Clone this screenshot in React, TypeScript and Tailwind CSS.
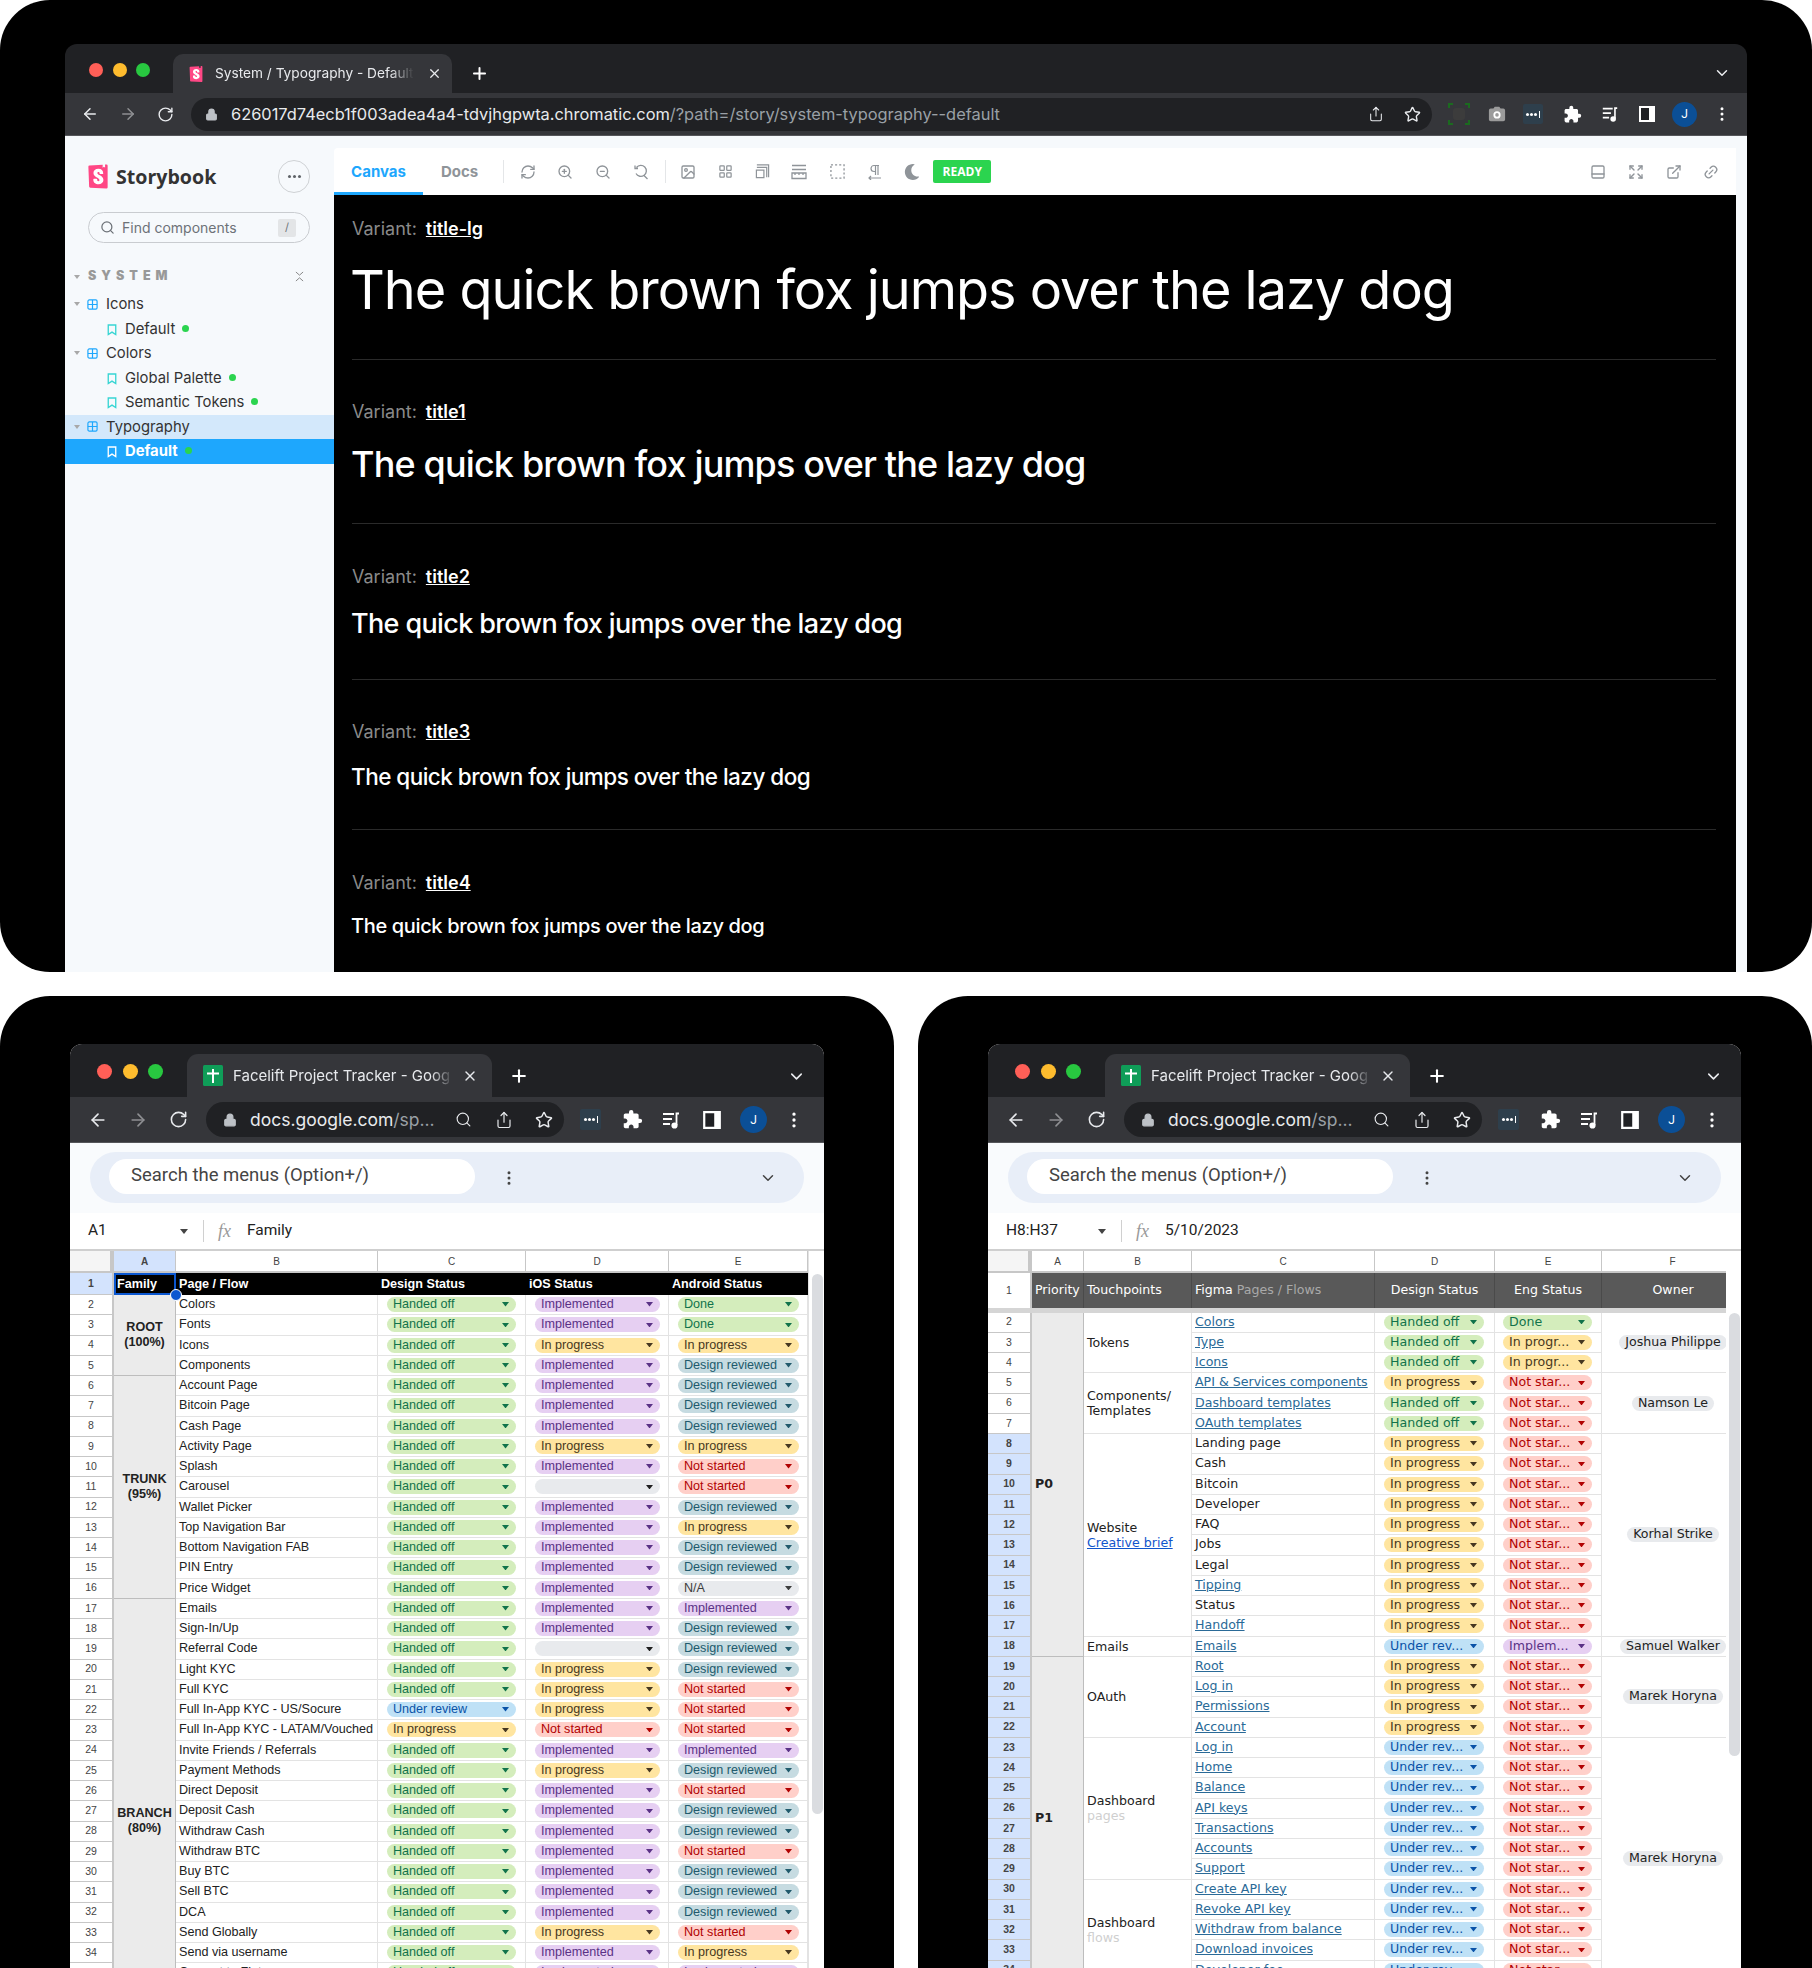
import type { ReactNode } from "react";
import {
  ArrowLeft,
  ArrowRight,
  ChevronDown,
  Expand,
  ExternalLink,
  Image as ImageIcon,
  LayoutGrid,
  Link2,
  Lock,
  MoreVertical,
  PanelBottom,
  Plus,
  RefreshCw,
  RotateCw,
  Search,
  Share,
  Star,
  X,
  ZoomIn,
  ZoomOut,
} from "lucide-react";
import { FaMoon } from "react-icons/fa";
import { MdExtension } from "react-icons/md";

const statuses: Record<string, { label: string; style: string }> = {
  H: { label: "Handed off", style: "bg-[#d4edbc] text-[#11734b]" },
  D: { label: "Done", style: "bg-[#d4edbc] text-[#11734b]" },
  M: { label: "Implemented", style: "bg-[#e6cff2] text-[#5a3286]" },
  P: { label: "In progress", style: "bg-[#ffe5a0] text-[#473821]" },
  R: { label: "Design reviewed", style: "bg-[#c6dbe1] text-[#215a6c]" },
  N: { label: "Not started", style: "bg-[#ffcfc9] text-[#b10202]" },
  U: { label: "Under review", style: "bg-[#bfe1f6] text-[#0a53a8]" },
  A: { label: "N/A", style: "bg-[#e8eaed] text-[#3d3d3d]" },
  B: { label: "", style: "bg-[#e8eaed] text-[#1f1f1f]" },
  u: { label: "Under rev...", style: "bg-[#bfe1f6] text-[#0a53a8]" },
  p: { label: "In progr...", style: "bg-[#ffe5a0] text-[#473821]" },
  n: { label: "Not star...", style: "bg-[#ffcfc9] text-[#b10202]" },
  m: { label: "Implem...", style: "bg-[#e6cff2] text-[#5a3286]" },
};

const trackerRows: [string, string, string, string][] = [
  ["Colors", "H", "M", "D"],
  ["Fonts", "H", "M", "D"],
  ["Icons", "H", "P", "P"],
  ["Components", "H", "M", "R"],
  ["Account Page", "H", "M", "R"],
  ["Bitcoin Page", "H", "M", "R"],
  ["Cash Page", "H", "M", "R"],
  ["Activity Page", "H", "P", "P"],
  ["Splash", "H", "M", "N"],
  ["Carousel", "H", "B", "N"],
  ["Wallet Picker", "H", "M", "R"],
  ["Top Navigation Bar", "H", "M", "P"],
  ["Bottom Navigation FAB", "H", "M", "R"],
  ["PIN Entry", "H", "M", "R"],
  ["Price Widget", "H", "M", "A"],
  ["Emails", "H", "M", "M"],
  ["Sign-In/Up", "H", "M", "R"],
  ["Referral Code", "H", "B", "R"],
  ["Light KYC", "H", "P", "R"],
  ["Full KYC", "H", "P", "N"],
  ["Full In-App KYC - US/Socure", "U", "P", "N"],
  ["Full In-App KYC - LATAM/Vouched", "P", "N", "N"],
  ["Invite Friends / Referrals", "H", "M", "M"],
  ["Payment Methods", "H", "P", "R"],
  ["Direct Deposit", "H", "M", "N"],
  ["Deposit Cash", "H", "M", "R"],
  ["Withdraw Cash", "H", "M", "R"],
  ["Withdraw BTC", "H", "M", "N"],
  ["Buy BTC", "H", "M", "R"],
  ["Sell BTC", "H", "M", "R"],
  ["DCA", "H", "M", "R"],
  ["Send Globally", "H", "P", "N"],
  ["Send via username", "H", "M", "P"],
  ["Convert to Fiat", "H", "M", "M"],
];

const familyGroups: Record<number, { top: string; bottom: string; span: string }> = {
  2: { top: "ROOT", bottom: "(100%)", span: "row-span-4" },
  6: { top: "TRUNK", bottom: "(95%)", span: "row-span-11" },
  17: { top: "BRANCH", bottom: "(80%)", span: "row-span-22" },
};

// second sheet: page, is it a link, design status, eng status
const touchRows: [string, boolean, string, string][] = [
  ["Colors", true, "H", "D"],
  ["Type", true, "H", "p"],
  ["Icons", true, "H", "p"],
  ["API & Services components", true, "P", "n"],
  ["Dashboard templates", true, "H", "n"],
  ["OAuth templates", true, "H", "n"],
  ["Landing page", false, "P", "n"],
  ["Cash", false, "P", "n"],
  ["Bitcoin", false, "P", "n"],
  ["Developer", false, "P", "n"],
  ["FAQ", false, "P", "n"],
  ["Jobs", false, "P", "n"],
  ["Legal", false, "P", "n"],
  ["Tipping", true, "P", "n"],
  ["Status", false, "P", "n"],
  ["Handoff", true, "P", "n"],
  ["Emails", true, "u", "m"],
  ["Root", true, "P", "n"],
  ["Log in", true, "P", "n"],
  ["Permissions", true, "P", "n"],
  ["Account", true, "P", "n"],
  ["Log in", true, "u", "n"],
  ["Home", true, "u", "n"],
  ["Balance", true, "u", "n"],
  ["API keys", true, "u", "n"],
  ["Transactions", true, "u", "n"],
  ["Accounts", true, "u", "n"],
  ["Support", true, "u", "n"],
  ["Create API key", true, "u", "n"],
  ["Revoke API key", true, "u", "n"],
  ["Withdraw from balance", true, "u", "n"],
  ["Download invoices", true, "u", "n"],
  ["Developer fee", true, "u", "n"],
];

const priorityGroups: Record<number, { label: string; span: string }> = {
  2: { label: "P0", span: "row-span-17" },
  19: { label: "P1", span: "row-span-16" },
};

const touchGroups: Record<number, { span: string; content: ReactNode }> = {
  2: { span: "row-span-3", content: "Tokens" },
  5: { span: "row-span-3", content: <>Components/<br />Templates</> },
  8: {
    span: "row-span-10",
    content: <>Website<br /><span className="text-[#1155cc] underline">Creative brief</span></>,
  },
  18: { span: "row-span-1", content: "Emails" },
  19: { span: "row-span-4", content: "OAuth" },
  23: { span: "row-span-7", content: <>Dashboard<br /><span className="text-[#cfcfcf]">pages</span></> },
  30: { span: "row-span-5", content: <>Dashboard<br /><span className="text-[#cfcfcf]">flows</span></> },
};

const ownerGroups: Record<number, { name: string; span: string }> = {
  2: { name: "Joshua Philippe", span: "row-span-3" },
  5: { name: "Namson Le", span: "row-span-3" },
  8: { name: "Korhal Strike", span: "row-span-10" },
  18: { name: "Samuel Walker", span: "row-span-1" },
  19: { name: "Marek Horyna", span: "row-span-4" },
  23: { name: "Marek Horyna", span: "row-span-12" },
};

const variants = [
  { name: "title-lg", box: "pt-[21px] pb-[37px]", gap: "mt-[18px] -ml-[2px]", text: "text-[54px] leading-[64px] tracking-[-1px]" },
  { name: "title1", box: "pt-[39px] pb-[35px]", gap: "mt-[17px] -ml-[1px]", text: "text-[36px] leading-[48px] tracking-[-0.85px] font-medium" },
  { name: "title2", box: "pt-[40px] pb-[37px]", gap: "mt-[18px] -ml-[1px]", text: "text-[27px] leading-[36px] tracking-[-0.63px] font-medium" },
  { name: "title3", box: "pt-[39px] pb-[36px]", gap: "mt-[18px] -ml-[1px]", text: "text-[22.5px] leading-[32px] tracking-[-0.53px] font-medium" },
  { name: "title4", box: "pt-[40px] pb-[30px]", gap: "mt-[17px] -ml-[1px]", text: "text-[20px] leading-[30px] tracking-[-0.35px] font-medium" },
];

function StorybookMark({ className }: { className: string }) {
  return (
    <svg viewBox="0 0 24 24" className={className}>
      <rect x="6" y="3" width="12" height="18" fill="#fff" />
      <path
        fill="#ff4785"
        d="M16.71.243l-.12 2.71a.18.18 0 00.29.15l1.06-.8.9.7a.18.18 0 00.28-.14l-.1-2.76 1.33-.1a1.2 1.2 0 011.279 1.2v21.596a1.2 1.2 0 01-1.26 1.2l-16.096-.72a1.2 1.2 0 01-1.15-1.16l-.75-19.797a1.2 1.2 0 011.13-1.27L16.7.222zM13.64 9.3c0 .47 3.16.24 3.59-.08 0-3.2-1.72-4.89-4.859-4.89-3.15 0-4.899 1.72-4.899 4.29 0 4.45 5.999 4.53 5.999 6.959 0 .7-.32 1.1-1.05 1.1-.96 0-1.35-.49-1.3-2.16 0-.36-3.649-.48-3.769 0-.27 4.03 2.23 5.2 5.099 5.2 2.79 0 4.969-1.49 4.969-4.18 0-4.77-6.099-4.64-6.099-6.999 0-.97.72-1.1 1.13-1.1.45 0 1.25.07 1.19 1.87z"
      />
    </svg>
  );
}

function SheetsMark() {
  return (
    <svg viewBox="0 0 20 21" className="w-[20px] h-[21px] shrink-0">
      <rect width="20" height="21" rx="1.5" fill="#0f9d58" />
      <path d="M10 4v14M4 8.5h12" stroke="#fff" strokeWidth="2" />
    </svg>
  );
}

function TrafficLights({ className, dot }: { className: string; dot: string }) {
  return (
    <div className={`flex ${className}`}>
      <span className={`${dot} rounded-full bg-[#ff5f57]`} />
      <span className={`${dot} rounded-full bg-[#febc2e]`} />
      <span className={`${dot} rounded-full bg-[#28c840]`} />
    </div>
  );
}

function Avatar({ className }: { className: string }) {
  return (
    <span className={`${className} rounded-full bg-[#0b4f96] text-white flex items-center justify-center text-[12px] [font-family:Roboto,sans-serif]`}>
      J
    </span>
  );
}

function DotsExtension({ className }: { className: string }) {
  return (
    <span className={`${className} rounded-[2px] bg-[#2e3f4c] flex items-center justify-center gap-[1px]`}>
      <span className="w-[3px] h-[3px] rounded-full bg-white" />
      <span className="w-[3px] h-[3px] rounded-full bg-white" />
      <span className="w-[3px] h-[3px] rounded-full bg-white" />
      <span className="w-[1px] h-[7px] ml-[1px] bg-white" />
    </span>
  );
}

function MediaQueue({ size }: { size: number }) {
  return (
    <svg viewBox="0 0 20 20" width={size} height={size} fill="none" stroke="#fff" strokeWidth="1.8">
      <path d="M2 4h11M2 9h9M2 14h7" />
      <path d="M15.5 15V3.5h2.5" />
      <circle cx="13.5" cy="15.5" r="2.2" fill="#fff" />
    </svg>
  );
}

function SidePanel({ size }: { size: number }) {
  return (
    <svg viewBox="0 0 18 18" width={size} height={size}>
      <path d="M1 1h16v16H1z" fill="#fff" />
      <path d="M3 3h8v12H3z" fill="#202124" />
    </svg>
  );
}

function BrowserChrome() {
  return (
    <>
      <div className="h-[49px] shrink-0 bg-[#202124] flex items-end">
        <TrafficLights className="ml-[24px] mb-[16px] gap-[9.5px]" dot="w-[14px] h-[14px]" />
        <div className="ml-[23px] w-[279px] h-[39px] bg-[#35363a] rounded-t-[10px] flex items-center pl-[15px] text-[#e8eaed]">
          <StorybookMark className="w-[16px] h-[20px] shrink-0" />
          <span className="ml-[11px] w-[199px] overflow-hidden whitespace-nowrap text-[13.7px] [font-family:Inter,sans-serif] [mask-image:linear-gradient(to_right,black_88%,transparent)]">
            System / Typography - Default
          </span>
          <X size={15} className="ml-[13px] shrink-0" />
        </div>
        <Plus size={19} className="ml-[18px] mb-[10px] text-white" strokeWidth={2.5} />
        <ChevronDown size={18} className="ml-auto mr-[16px] mb-[11px] text-[#e8eaed]" />
      </div>
      <div className="h-[43px] shrink-0 bg-[#35363a] border-b border-[#55565a] flex items-center text-[#e8eaed]">
        <ArrowLeft size={18} className="ml-[16px]" />
        <ArrowRight size={18} className="ml-[20px] text-[#8e8f92]" />
        <RotateCw size={17} className="ml-[20px]" />
        <div className="ml-[17px] w-[1241px] h-[33px] rounded-full bg-[#202124] flex items-center pl-[14px] pr-[11px]">
          <Lock size={13} fill="#bdc1c6" className="text-[#bdc1c6]" />
          <span className="ml-[13px] text-[16.4px] [font-family:Inter,sans-serif] whitespace-nowrap">
            626017d74ecb1f003adea4a4-tdvjhgpwta.chromatic.com
            <span className="text-[#9aa0a6]">/?path=/story/system-typography--default</span>
          </span>
          <Share size={16} strokeWidth={1.6} className="ml-auto" />
          <Star size={17} className="ml-[20px]" />
        </div>
        <svg viewBox="0 0 24 24" className="ml-[15px] w-[24px] h-[24px]" fill="none" stroke="#1b6a1f" strokeWidth="2">
          <path d="M2 6V2h4M18 2h4v4M22 18v4h-4M6 22H2v-4" />
          <rect x="6" y="6" width="12" height="12" rx="3" stroke="none" fill="#3c3c3c" />
        </svg>
        <svg viewBox="0 0 20 20" className="ml-[17px] w-[18px] h-[18px]">
          <path d="M1 6a2 2 0 012-2h3l1.5-2h5L14 4h3a2 2 0 012 2v10a2 2 0 01-2 2H3a2 2 0 01-2-2z" fill="#9b9b9b" />
          <circle cx="10" cy="11" r="4" fill="#fff" />
          <circle cx="10" cy="11" r="2" fill="#9b9b9b" />
        </svg>
        <DotsExtension className="ml-[17px] w-[20px] h-[20px]" />
        <MdExtension size={19} className="ml-[20px] text-white" />
        <span className="ml-[19px] flex"><MediaQueue size={18} /></span>
        <span className="ml-[19px] flex"><SidePanel size={18} /></span>
        <Avatar className="ml-[16px] w-[25px] h-[25px]" />
        <MoreVertical size={18} className="ml-[16px] text-white" />
      </div>
    </>
  );
}

function SidebarRow({ label, story, depth, active, open, dot }: { label: string; story?: boolean; depth?: boolean; active?: boolean; open?: boolean; dot?: boolean }) {
  const rowTone = active ? "bg-[#1ea7fd] text-white font-bold" : open ? "bg-[#d3e8fb] text-[#333]" : "text-[#333]";
  return (
    <div className={`h-[24.5px] flex items-center ${rowTone}`}>
      {depth ? (
        <span className="ml-[9px] w-0 h-0 border-x-[3.5px] border-x-transparent border-t-[4px] border-t-[#a8a8a8]" />
      ) : (
        <span className="ml-[9px] w-[7px]" />
      )}
      {story ? (
        <svg viewBox="0 0 12 14" className={`ml-[26px] w-[10px] h-[12px] mt-[2px] ${active ? "text-white" : "text-[#37d5d3]"}`} fill="none" stroke="currentColor" strokeWidth="1.6">
          <path d="M1.5 1h9v11.5L6 9.5l-4.5 3z" />
        </svg>
      ) : (
        <svg viewBox="0 0 12 12" className="ml-[7px] w-[11px] h-[11px] text-[#1ea7fd]" fill="none" stroke="currentColor" strokeWidth="1.3">
          <rect x="1" y="1" width="10" height="10" rx="1.5" />
          <path d="M6 1v10M1 6h10" />
        </svg>
      )}
      <span className="text-[14.8px] ml-[8px]">{label}</span>
      {dot && <span className="ml-[7px] -mt-[1px] w-[7px] h-[7px] rounded-full bg-[#2bd44f]" />}
    </div>
  );
}

function Sidebar() {
  return (
    <aside className="w-[269px] shrink-0 pt-[24px] [font-family:Inter,sans-serif]">
      <div className="flex items-center pl-[22px] pr-[24px]">
        <StorybookMark className="w-[24px] h-[27px] -ml-[1px]" />
        <span className="ml-[6px] text-[19.6px] font-bold text-[#333] [font-family:'Open_Sans',sans-serif]">Storybook</span>
        <span className="ml-auto w-[32px] h-[33px] rounded-full border border-[#cfd2d5] flex items-center justify-center gap-[2px]">
          <span className="w-[3px] h-[3px] rounded-full bg-[#5f6368]" />
          <span className="w-[3px] h-[3px] rounded-full bg-[#5f6368]" />
          <span className="w-[3px] h-[3px] rounded-full bg-[#5f6368]" />
        </span>
      </div>
      <div className="mt-[19px] ml-[23px] w-[222px] h-[31px] rounded-full border border-[#c9ccd0] flex items-center pl-[11px] pr-[13px] text-[#6d7278]">
        <Search size={15} />
        <span className="ml-[7px] text-[14px]">Find components</span>
        <span className="ml-auto w-[18px] h-[18px] rounded-[2px] bg-[#e3e5e7] flex items-center justify-center text-[11px]">/</span>
      </div>
      <div className="mt-[25px] h-[17px] flex items-center pl-[9px] pr-[30px]">
        <span className="w-0 h-0 border-x-[3.5px] border-x-transparent border-t-[4px] border-t-[#a8a8a8]" />
        <span className="ml-[8px] text-[12.5px] font-black tracking-[0.4em] text-[#999]">SYSTEM</span>
        <svg viewBox="0 0 10 12" className="ml-auto w-[9px] h-[11px]" fill="none" stroke="#888" strokeWidth="1.1">
          <path d="M1 1l4 3.5L9 1M1 11l4-3.5 4 3.5" />
        </svg>
      </div>
      <div className="mt-[7px]">
        <SidebarRow label="Icons" depth />
        <SidebarRow label="Default" story dot />
        <SidebarRow label="Colors" depth />
        <SidebarRow label="Global Palette" story dot />
        <SidebarRow label="Semantic Tokens" story dot />
        <SidebarRow label="Typography" depth open />
        <SidebarRow label="Default" story dot active />
      </div>
    </aside>
  );
}

function ToolIcon({ children, className }: { children: ReactNode; className?: string }) {
  return <span className={`w-[16px] h-[16px] flex items-center justify-center text-[#8f9499] ${className ?? "ml-[22px]"}`}>{children}</span>;
}

function StorybookToolbar() {
  return (
    <div className="h-[47px] bg-white rounded-tl-[4px] flex items-center [font-family:Inter,sans-serif] shrink-0">
      <div className="h-full w-[89px] pt-[5px] border-b-[3px] border-[#1ea7fd] flex items-center justify-center text-[15px] font-bold text-[#1ea7fd]">Canvas</div>
      <span className="ml-[18px] mt-[2px] text-[15px] font-bold text-[#8f9499]">Docs</span>
      <span className="ml-[25px] w-px h-[23px] bg-[#e4e6e8]" />
      <ToolIcon className="ml-[16px]"><RefreshCw size={16} /></ToolIcon>
      <ToolIcon className="ml-[21px]"><ZoomIn size={16} /></ToolIcon>
      <ToolIcon><ZoomOut size={16} /></ToolIcon>
      <ToolIcon>
        <svg viewBox="0 0 16 16" className="w-[16px] h-[16px]" fill="none" stroke="currentColor" strokeWidth="1.3">
          <path d="M3.5 3.5a5.5 5.5 0 11-.5 6M10.5 11L14.5 15M2 1.5v3h3" />
        </svg>
      </ToolIcon>
      <span className="ml-[16px] w-px h-[23px] bg-[#e4e6e8]" />
      <ToolIcon className="ml-[14px]"><ImageIcon size={16} /></ToolIcon>
      <ToolIcon className="ml-[21px]"><LayoutGrid size={15} /></ToolIcon>
      <ToolIcon className="ml-[21px]">
        <svg viewBox="0 0 16 16" className="w-[15px] h-[15px]" fill="none" stroke="currentColor" strokeWidth="1.3">
          <path d="M2 3.5h10.5V14M2 1h12.5v13M1.5 6.5h8v8h-8z" />
        </svg>
      </ToolIcon>
      <ToolIcon className="ml-[21px]">
        <svg viewBox="0 0 16 16" className="w-[16px] h-[16px]" fill="none" stroke="currentColor" strokeWidth="1.3">
          <path d="M1 1.5h14M1 5.5h14M1 14.5h14M1 9h14v5.5H1zM4 9v2M8 9v2M12 9v2" />
        </svg>
      </ToolIcon>
      <ToolIcon className="ml-[22px]">
        <svg viewBox="0 0 16 16" className="w-[15px] h-[15px]" fill="none" stroke="currentColor" strokeWidth="1.4" strokeDasharray="2.2 2.2">
          <rect x="1" y="1" width="14" height="14" />
        </svg>
      </ToolIcon>
      <ToolIcon className="ml-[22px]">
        <svg viewBox="0 0 16 16" className="w-[16px] h-[16px]" fill="none" stroke="currentColor" strokeWidth="1.2">
          <path d="M12 1.5H7a3 3 0 000 6h1.5M8.5 1.5V11M11 1.5V11M2 14h12M4 12l-2 2 2 2" />
        </svg>
      </ToolIcon>
      <ToolIcon className="ml-[21px]"><FaMoon size={16} /></ToolIcon>
      <span className="ml-[13px] w-[58px] h-[23px] rounded-[2px] bg-[#2bd44f] text-white text-[12px] font-bold flex items-center justify-center [font-family:'Open_Sans',sans-serif]">READY</span>
      <ToolIcon className="ml-auto"><PanelBottom size={16} /></ToolIcon>
      <ToolIcon><Expand size={16} /></ToolIcon>
      <ToolIcon><ExternalLink size={16} /></ToolIcon>
      <ToolIcon className="ml-[21px] mr-[17px]"><Link2 size={16} className="-rotate-45" /></ToolIcon>
    </div>
  );
}

function Canvas() {
  return (
    <div className="flex-1 bg-black text-white pl-[18px] pr-[20px] [font-family:Inter,sans-serif] overflow-hidden">
      {variants.map((v, i) => (
        <section key={v.name} className={`${v.box} ${i < variants.length - 1 ? "border-b border-[#2a2a2a]" : ""}`}>
          <div className="h-[24px] flex items-center text-[18px]">
            <span className="text-[#8a8a8a]">Variant:</span>
            <span className="ml-[9px] font-semibold underline">{v.name}</span>
          </div>
          <div className={`${v.gap} ${v.text} whitespace-nowrap`}>The quick brown fox jumps over the lazy dog</div>
        </section>
      ))}
    </div>
  );
}

function StorybookPanel() {
  return (
    <div className="h-[972px] shrink-0 rounded-[50px] bg-black pt-[44px] px-[65px] overflow-hidden">
      <div className="h-full rounded-t-[12px] overflow-hidden flex flex-col">
        <BrowserChrome />
        <div className="flex-1 min-h-0 bg-[#f6f9fc] flex">
          <Sidebar />
          <div className="flex-1 min-w-0 pt-[12px] pr-[11px] flex flex-col">
            <StorybookToolbar />
            <Canvas />
          </div>
        </div>
      </div>
    </div>
  );
}

function SheetChrome({ nameBox, formula }: { nameBox: string; formula: string }) {
  return (
    <>
      <div className="h-[53px] shrink-0 bg-[#202124] flex items-end">
        <TrafficLights className="ml-[27px] mb-[18px] gap-[10.5px]" dot="w-[15px] h-[15px]" />
        <div className="ml-[24px] w-[305px] h-[43px] bg-[#35363a] rounded-t-[11px] flex items-center pl-[16px] text-[#e8eaed]">
          <SheetsMark />
          <span className="ml-[10px] mt-[1px] w-[220px] overflow-hidden whitespace-nowrap text-[15px] [font-family:Inter,sans-serif] [mask-image:linear-gradient(to_right,black_90%,transparent)]">
            Facelift Project Tracker - Goog
          </span>
          <X size={16} className="ml-[9px] shrink-0" />
        </div>
        <Plus size={20} className="ml-[17px] mb-[11px] text-white" strokeWidth={2.5} />
        <ChevronDown size={19} className="ml-auto mr-[18px] mb-[11px] text-[#e8eaed]" />
      </div>
      <div className="h-[46px] shrink-0 bg-[#35363a] border-b border-[#55565a] flex items-center text-[#e8eaed]">
        <ArrowLeft size={20} className="ml-[18px]" />
        <ArrowRight size={20} className="ml-[20px] text-[#8e8f92]" />
        <RotateCw size={19} className="ml-[21px]" />
        <div className="ml-[18px] w-[358px] h-[35px] rounded-full bg-[#202124] flex items-center pl-[17px] pr-[11px]">
          <Lock size={14} fill="#bdc1c6" className="text-[#bdc1c6]" />
          <span className="ml-[13px] mt-[1px] text-[17.5px] [font-family:Inter,sans-serif] whitespace-nowrap">
            docs.google.com<span className="text-[#9aa0a6]">/sp...</span>
          </span>
          <Search size={17} strokeWidth={1.6} className="ml-auto" />
          <Share size={18} strokeWidth={1.6} className="ml-[23px]" />
          <Star size={18} className="ml-[22px]" />
        </div>
        <DotsExtension className="ml-[16px] w-[21px] h-[21px]" />
        <MdExtension size={21} className="ml-[21px] text-white" />
        <span className="ml-[18px] flex"><MediaQueue size={20} /></span>
        <span className="ml-[21px] flex"><SidePanel size={20} /></span>
        <Avatar className="ml-[18px] w-[27px] h-[27px]" />
        <MoreVertical size={20} className="ml-[17px] text-white" />
      </div>
      <div className="h-[70px] shrink-0 bg-[#f9fbfd] px-[20px] pt-[9px] [font-family:Roboto,sans-serif]">
        <div className="h-[51px] rounded-full bg-[#e8eef8] flex items-center pl-[19px] pr-[27px]">
          <div className="w-[366px] h-[35px] -mt-[3px] rounded-full bg-white flex items-center pl-[22px] text-[18.5px] text-[#444]">
            Search the menus (Option+/)
          </div>
          <MoreVertical size={18} className="ml-[25px] text-[#444]" />
          <ChevronDown size={18} className="ml-auto text-[#444]" />
        </div>
      </div>
      <div className="h-[38px] shrink-0 bg-white border-b-2 border-[#cfcfcf] flex items-center pl-[18px] text-[15.5px] text-[#222] [font-family:Roboto,sans-serif]">
        <span className="w-[92px]">{nameBox}</span>
        <span className="w-0 h-0 border-x-[4.5px] border-x-transparent border-t-[5px] border-t-[#444]" />
        <span className="ml-[15px] w-px h-[22px] bg-[#d0d0d0]" />
        <span className="ml-[14px] w-[22px] italic text-[#999] text-[18px] [font-family:'Liberation_Serif',serif]">fx</span>
        <span className="ml-[7px]">{formula}</span>
      </div>
    </>
  );
}

function Triangle() {
  return (
    <svg viewBox="0 0 8 5" className="w-[7px] h-[4.5px] shrink-0 fill-current">
      <path d="M0 0h8L4 5z" />
    </svg>
  );
}

function Chip({ code }: { code: string }) {
  const s = statuses[code];
  return (
    <span className={`w-full h-[15px] rounded-full flex items-center justify-between pl-[6px] pr-[7px] whitespace-nowrap ${s.style}`}>
      <span>{s.label}</span>
      <Triangle />
    </span>
  );
}

const cellLine = "border-r border-b border-[#e3e3e3]";

function RowNumber({ n, selected }: { n: number; selected?: boolean }) {
  return (
    <div className={`border-r-2 border-b border-[#c7c7c7] flex items-center justify-center text-[10.5px] text-[#444] [font-family:'Liberation_Sans',sans-serif] ${selected ? "bg-[#d3e3fd] font-bold" : "bg-white"}`}>
      {n}
    </div>
  );
}

function ColumnLetter({ label, selected }: { label: string; selected?: boolean }) {
  return (
    <div className={`border-r border-b-2 border-[#c7c7c7] flex items-center justify-center text-[10px] text-[#444] [font-family:'Liberation_Sans',sans-serif] ${selected ? "bg-[#d3e3fd] font-bold" : "bg-white"}`}>
      {label}
    </div>
  );
}

function TrackerSheet() {
  return (
    <div className="h-full rounded-t-[12px] overflow-hidden flex flex-col bg-white">
      <SheetChrome nameBox="A1" formula="Family" />
      <div className="flex shrink-0 [font-family:'Liberation_Sans',sans-serif] text-[12.6px] text-[#222]">
        <div className="w-[738px] grid grid-cols-[44px_62px_202px_148px_143px_139px] grid-rows-[22px_22px] auto-rows-[20.25px]">
          <div className="bg-[#f5f5f5] border-r-[4px] border-b-2 border-[#c7c7c7]" />
          <ColumnLetter label="A" selected />
          <ColumnLetter label="B" />
          <ColumnLetter label="C" />
          <ColumnLetter label="D" />
          <ColumnLetter label="E" />

          <RowNumber n={1} selected />
          <div className="relative bg-black text-white font-bold flex items-center pl-[1px] border-2 border-[#0b57d0]">
            Family
            <span className="absolute -right-[8px] -bottom-[8px] w-[12px] h-[12px] rounded-full bg-[#0b57d0] border border-white" />
          </div>
          <div className="bg-black text-white font-bold flex items-center pl-[3px]">Page / Flow</div>
          <div className="bg-black text-white font-bold flex items-center pl-[3px]">Design Status</div>
          <div className="bg-black text-white font-bold flex items-center pl-[3px]">iOS Status</div>
          <div className="bg-black text-white font-bold flex items-center pl-[3px]">Android Status</div>

          {trackerRows.map((row, i) => {
            const n = i + 2;
            const group = familyGroups[n];
            return (
              <div key={n} className="contents">
                <RowNumber n={n} />
                {group && (
                  <div className={`${group.span} bg-[#ebebeb] border-r border-b border-[#bdbdbd] flex flex-col items-center justify-center font-bold leading-[15px] text-[#222]`}>
                    <span>{group.top}</span>
                    <span>{group.bottom}</span>
                  </div>
                )}
                <div className={`${cellLine} flex items-center pl-[3px] whitespace-nowrap overflow-hidden`}>{row[0]}</div>
                <div className={`${cellLine} flex items-center pl-[9px] pr-[9px]`}><Chip code={row[1]} /></div>
                <div className={`${cellLine} flex items-center pl-[9px] pr-[8px]`}><Chip code={row[2]} /></div>
                <div className={`${cellLine} flex items-center pl-[9px] pr-[8px]`}><Chip code={row[3]} /></div>
              </div>
            );
          })}
        </div>
        <div className="flex-1 pt-[23px] pl-[3px] border-l border-[#e3e3e3]">
          <div className="w-[11px] h-[540px] rounded-full bg-[#dadce0]" />
        </div>
      </div>
    </div>
  );
}

function TouchpointSheet() {
  return (
    <div className="h-full rounded-t-[12px] overflow-hidden flex flex-col bg-white">
      <SheetChrome nameBox="H8:H37" formula="5/10/2023" />
      <div className="flex shrink-0 [font-family:'DejaVu_Sans',sans-serif] text-[12.6px] text-[#222]">
        <div className="w-[738px] overflow-hidden">
          {/* column F runs on under the scroll bar, the owner pills stay centred on that full width */}
          <div className="w-[756px] grid grid-cols-[44px_52px_108px_183px_120px_107px_142px] grid-rows-[22px_35px_4.5px] auto-rows-[20.25px]">
            <div className="bg-[#f5f5f5] border-r-[4px] border-b-2 border-[#c7c7c7]" />
            <ColumnLetter label="A" />
            <ColumnLetter label="B" />
            <ColumnLetter label="C" />
            <ColumnLetter label="D" />
            <ColumnLetter label="E" />
            <ColumnLetter label="F" />

            <div className="border-r-2 border-[#c7c7c7] flex items-center justify-center text-[10.5px] text-[#444] [font-family:'Liberation_Sans',sans-serif]">1</div>
            <div className="bg-[#595959] text-white flex items-center pl-[3px] border-r border-[#4a4a4a] overflow-hidden">Priority</div>
            <div className="bg-[#595959] text-white flex items-center pl-[3px] border-r border-[#4a4a4a]">Touchpoints</div>
            <div className="bg-[#595959] text-white flex items-center pl-[3px] border-r border-[#4a4a4a]">
              Figma&nbsp;<span className="text-[#a9a9a9]">Pages / Flows</span>
            </div>
            <div className="bg-[#595959] text-white flex items-center justify-center border-r border-[#4a4a4a]">Design Status</div>
            <div className="bg-[#595959] text-white flex items-center justify-center border-r border-[#4a4a4a]">Eng Status</div>
            <div className="bg-[#595959] text-white flex items-center justify-center">Owner</div>
            <div className="col-span-7 bg-[#d5d5d5]" />

            {touchRows.map((row, i) => {
              const n = i + 2;
              const priority = priorityGroups[n];
              const touch = touchGroups[n];
              const owner = ownerGroups[n];
              return (
                <div key={n} className="contents">
                  <RowNumber n={n} selected={n >= 8} />
                  {priority && (
                    <div className={`${priority.span} bg-[#ebebeb] border-r border-b border-[#bdbdbd] flex items-center pl-[3px] font-bold`}>
                      {priority.label}
                    </div>
                  )}
                  {touch && (
                    <div className={`${touch.span} ${cellLine} flex items-center pl-[3px] leading-[15px]`}>
                      <div>{touch.content}</div>
                    </div>
                  )}
                  <div className={`${cellLine} flex items-center pl-[3px] whitespace-nowrap overflow-hidden ${row[1] ? "text-[#2a6a97] underline" : ""}`}>
                    {row[0]}
                  </div>
                  <div className={`${cellLine} flex items-center pl-[9px] pr-[10px]`}><Chip code={row[2]} /></div>
                  <div className={`${cellLine} flex items-center pl-[8px] pr-[9px]`}><Chip code={row[3]} /></div>
                  {owner && (
                    <div className={`${owner.span} border-b border-[#e3e3e3] flex items-center justify-center`}>
                      <span className="h-[15px] px-[6px] rounded-full bg-[#e8eaed] flex items-center whitespace-nowrap">{owner.name}</span>
                    </div>
                  )}
                </div>
              );
            })}
          </div>
        </div>
        <div className="flex-1 pt-[62px] pl-[3px]">
          <div className="w-[11px] h-[443px] rounded-full bg-[#dadce0]" />
        </div>
      </div>
    </div>
  );
}

export default function App() {
  return (
    <div className="w-[1812px] h-[1968px] bg-white flex flex-col gap-[24px] overflow-hidden">
      <StorybookPanel />
      <div className="flex-1 min-h-0 grid grid-cols-2 gap-[24px]">
        <div className="rounded-t-[50px] bg-black pt-[48px] pl-[70px] pr-[70px] overflow-hidden">
          <TrackerSheet />
        </div>
        <div className="rounded-t-[50px] bg-black pt-[48px] pl-[70px] pr-[71px] overflow-hidden">
          <TouchpointSheet />
        </div>
      </div>
    </div>
  );
}
